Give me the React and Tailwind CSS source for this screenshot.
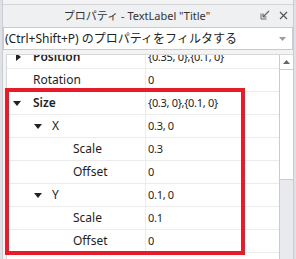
import React from "react";

const rows = [
  { name: "Position", value: "{0.35, 0},{0.1, 0}", bold: true, arrow: "right", indent: 0 },
  { name: "Rotation", value: "0", indent: 0 },
  { name: "Size", value: "{0.3, 0},{0.1, 0}", bold: true, arrow: "down", indent: 0 },
  { name: "X", value: "0.3, 0", arrow: "down", indent: 1 },
  { name: "Scale", value: "0.3", indent: 2 },
  { name: "Offset", value: "0", indent: 2 },
  { name: "Y", value: "0.1, 0", arrow: "down", indent: 1 },
  { name: "Scale", value: "0.1", indent: 2 },
  { name: "Offset", value: "0", indent: 2 },
];

function Arrow({ dir }) {
  if (dir === "right") {
    return (
      <svg width="5" height="8" viewBox="0 0 5 8">
        <path d="M0 0 L5 4 L0 8 Z" fill="#222" />
      </svg>
    );
  }
  return (
    <svg width="8" height="5" viewBox="0 0 8 5">
      <path d="M0 0 L8 0 L4 5 Z" fill="#222" />
    </svg>
  );
}

function Row({ row, first }) {
  const pad = row.indent === 0 ? "pl-[26px]" : row.indent === 1 ? "pl-[45px]" : "pl-[66px]";
  return (
    <div className={"flex h-[23px] border-b border-[#ececec] " + (first ? "-mt-[9px]" : "")}>
      <div className={"relative flex w-[139px] items-center border-r border-[#ececec] text-[12px] text-[#1e1e1e] " + pad + (row.bold ? " font-semibold" : "")}>
        {row.arrow && (
          <span className={"absolute flex items-center " + (row.indent === 0 ? (row.arrow === "right" ? "left-[9px]" : "left-[6px]") : "left-[27px]")}>
            <Arrow dir={row.arrow} />
          </span>
        )}
        {row.name}
      </div>
      <div className="flex flex-1 items-center pl-[2px] text-[11px] tracking-[-0.3px] text-[#1e1e1e]">{row.value}</div>
    </div>
  );
}

export default function App() {
  return (
    <div
      className="relative flex h-[259px] w-[296px] overflow-hidden bg-[#f3f3f3]"
      style={{ fontFamily: '"Noto Sans", "Noto Sans CJK JP", sans-serif' }}
    >
      <div className="w-[3px] border-r border-[#c9ccd3] bg-[#dfe1e6]" />
      <div className="flex flex-1 flex-col">
        <div className="h-[4px] bg-[#f3f3f3]" />
        <div className="relative flex h-[23px] items-center justify-center border-t border-[#d4d6db] bg-[#eef0f2] pr-[22px] text-[11px] text-[#333]">
          <span>プロパティ - TextLabel "Title"</span>
          <div className="absolute right-[5px] top-[5px] flex items-center gap-[9px] text-[#555]">
            <svg width="10" height="10" viewBox="0 0 10 10">
              <path d="M1 3.5 V9 H6.5" fill="none" stroke="#666" strokeWidth="1" />
              <path d="M3 7 L9 1 M3 7 V3.5 M3 7 H6.5" fill="none" stroke="#666" strokeWidth="1.2" />
            </svg>
            <svg width="9" height="9" viewBox="0 0 9 9">
              <path d="M1 1 L8 8 M8 1 L1 8" stroke="#555" strokeWidth="1.2" />
            </svg>
          </div>
        </div>
        <div className="flex h-[23px] items-center justify-between border border-[#c8cad0] bg-white pl-[1px] pr-[6px] text-[12px] text-[#222]">
          <span>(Ctrl+Shift+P) のプロパティをフィルタする</span>
          <svg width="7" height="4" viewBox="0 0 7 4">
            <path d="M0 0 H7 L3.5 4 Z" fill="#9a9ca2" />
          </svg>
        </div>
        <div className="h-[4px]" />
        <div className="ml-[3px] flex flex-1 overflow-hidden border-l border-t border-[#d6d8dd] bg-white">
          <div className="flex flex-1 flex-col">
            {rows.map((r, i) => (
              <Row key={i} row={r} first={i === 0} />
            ))}
          </div>
          <div className="flex w-[14px] flex-col border-l border-[#c9ccd3] bg-[#e9eaee]">
            <div className="flex h-[15px] items-center justify-center border-b border-[#c9ccd3] bg-white">
              <svg width="7" height="4" viewBox="0 0 7 4">
                <path d="M0 4 H7 L3.5 0 Z" fill="#666" />
              </svg>
            </div>
            <div className="h-[110px] border-b border-[#c9ccd3] bg-white" />
          </div>
        </div>
      </div>
      <div className="w-[3px] border-l border-[#c9ccd3] bg-[#dfe1e6]" />
      <div className="pointer-events-none absolute left-[5px] top-[88px] h-[167px] w-[240px] border-4 border-[#e81c28]" />
    </div>
  );
}
